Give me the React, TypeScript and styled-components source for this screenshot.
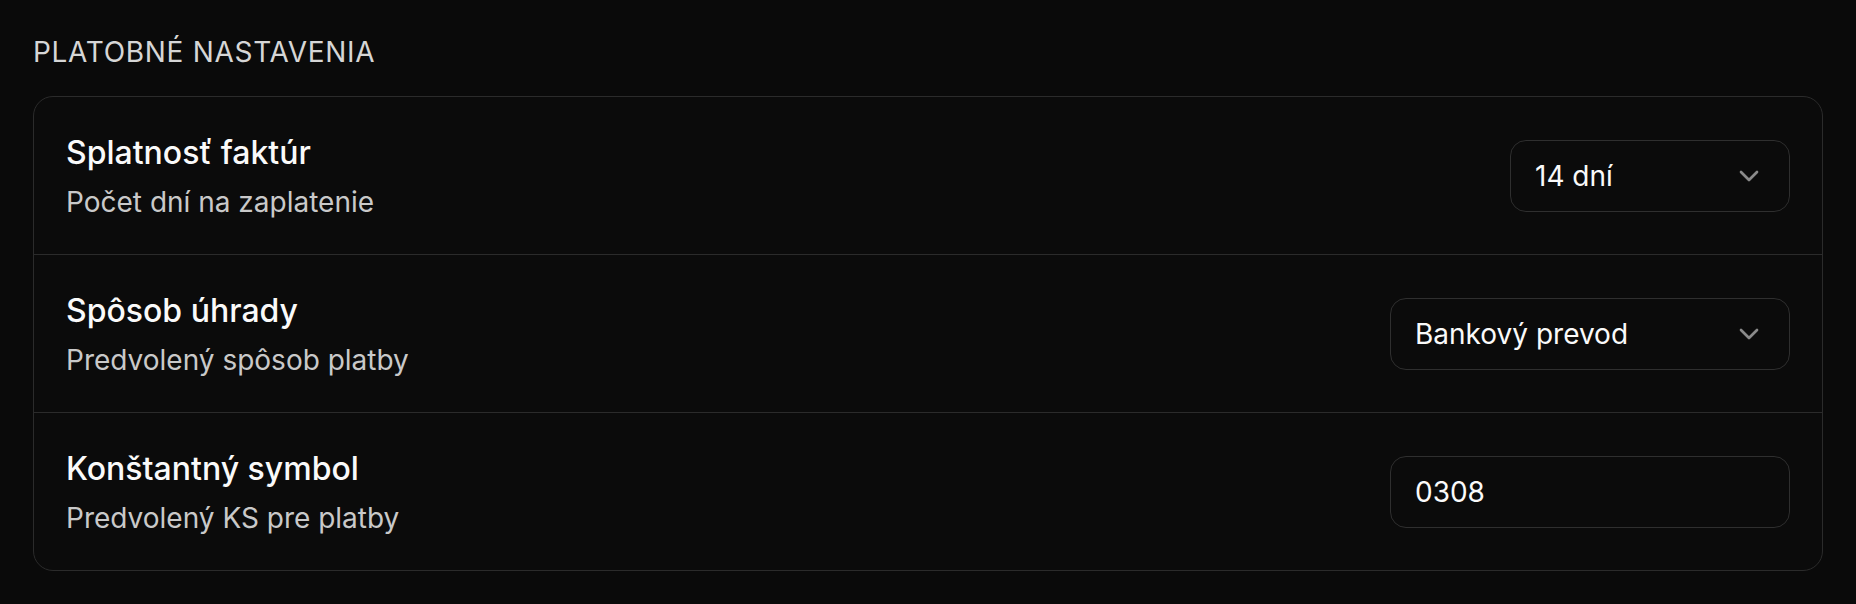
import styled, { createGlobalStyle } from 'styled-components'
import { ChevronDown } from 'lucide-react'

const Global = createGlobalStyle`
  html, body { margin: 0; background: #0a0a0a; }
  body { font-family: Inter, "Noto Sans", sans-serif; color: #fafafa; }
`

const Page = styled.div`
  padding: 35px 33px 33px;
`
const Heading = styled.h2`
  margin: 0 0 27px;
  font-size: 28px; line-height: 34px; font-weight: 400;
  letter-spacing: 0.7px; text-transform: uppercase; color: #d6d6d6;
`
const Card = styled.div`
  border: 1px solid #2b2b2b; border-radius: 20px; background: #0b0b0b;
  overflow: hidden;
`
const Row = styled.div`
  display: flex; align-items: center; justify-content: space-between;
  padding: 32px;
  & + & { border-top: 1px solid #2b2b2b; }
`
const Label = styled.div`display: flex; flex-direction: column;`
const Title = styled.div`
  font-size: 32px; line-height: 48px; font-weight: 500; color: #fafafa;
`
const Hint = styled.div`
  margin-top: 5px; font-size: 28px; line-height: 40px; color: #c9c9c9;
`
const Field = styled.div<{ $w: number }>`
  box-sizing: border-box; width: ${p => p.$w}px; height: 72px;
  display: flex; align-items: center; justify-content: space-between;
  padding: 0 24px; border: 1px solid #2f2f2f; border-radius: 16px;
  background: #0b0b0b; font-size: 28px; color: #fafafa;
  svg { color: #8a8a8a; flex-shrink: 0; }
`

type Setting = { title: string; hint: string; value: string; width: number; select?: boolean }

const settings: Setting[] = [
  { title: 'Splatnosť faktúr', hint: 'Počet dní na zaplatenie', value: '14 dní', width: 280, select: true },
  { title: 'Spôsob úhrady', hint: 'Predvolený spôsob platby', value: 'Bankový prevod', width: 400, select: true },
  { title: 'Konštantný symbol', hint: 'Predvolený KS pre platby', value: '0308', width: 400 },
]

export default function App() {
  return (
    <Page>
      <Global />
      <Heading>Platobné nastavenia</Heading>
      <Card>
        {settings.map(s => (
          <Row key={s.title}>
            <Label>
              <Title>{s.title}</Title>
              <Hint>{s.hint}</Hint>
            </Label>
            <Field $w={s.width}>
              <span>{s.value}</span>
              {s.select && <ChevronDown size={32} strokeWidth={2} />}
            </Field>
          </Row>
        ))}
      </Card>
    </Page>
  )
}
